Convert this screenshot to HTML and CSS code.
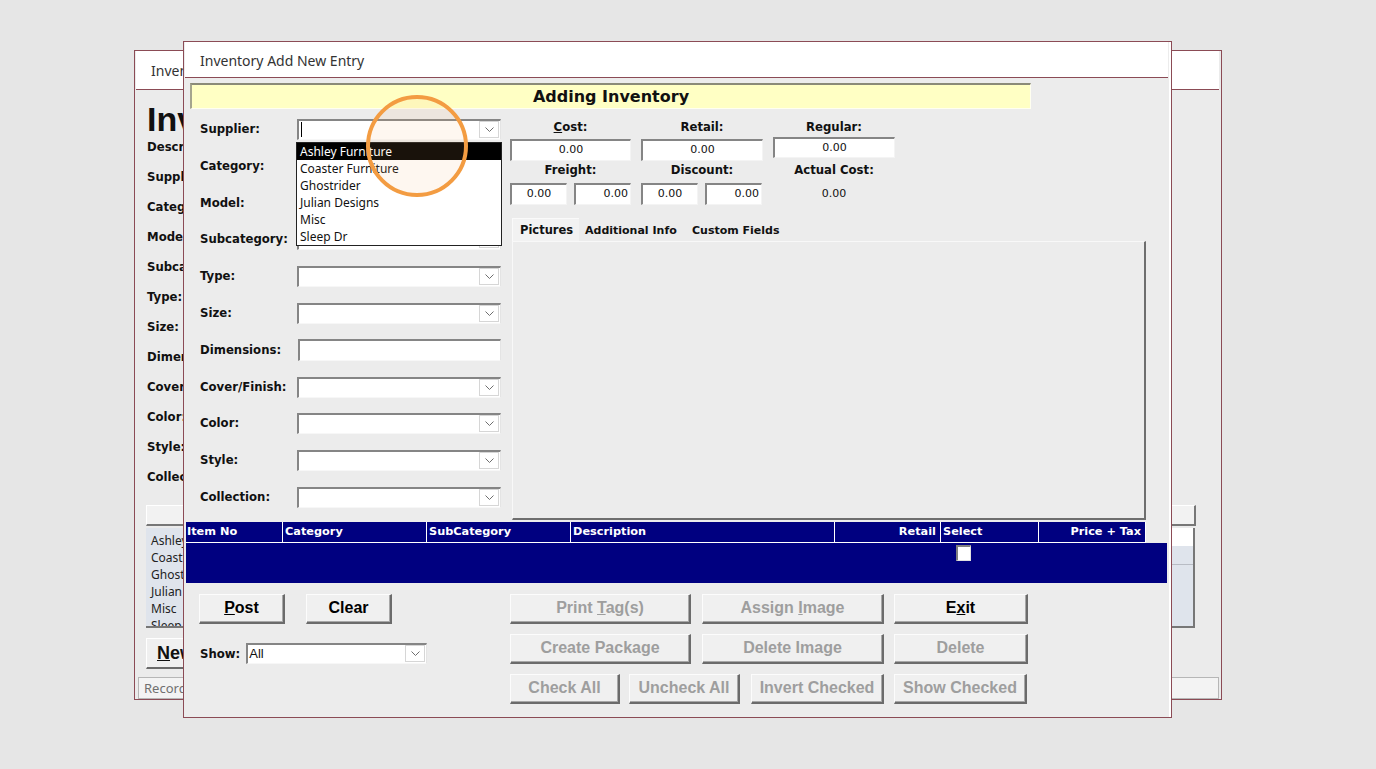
FILE: index.html
```html
<!DOCTYPE html>
<html>
<head>
<meta charset="utf-8">
<title>Inventory Add New Entry</title>
<link rel="stylesheet" href="styles.css">
</head>
<body>
<div class="win-back">
  <div class="wb-title">Inventory</div>
  <div class="wb-body">
    <div class="wb-heading">Inventory</div>
    <div class="wb-labels">
      <div>Description:</div>
      <div>Supplier:</div>
      <div>Category:</div>
      <div>Model:</div>
      <div>Subcategory:</div>
      <div>Type:</div>
      <div>Size:</div>
      <div>Dimensions:</div>
      <div>Cover/Finish:</div>
      <div>Color:</div>
      <div>Style:</div>
      <div>Collection:</div>
    </div>
    <div class="wb-listhead"></div>
    <div class="wb-list">
      <div class="wb-items">
        <div>Ashley Furniture</div>
        <div>Coaster Furniture</div>
        <div>Ghostrider</div>
        <div>Julian Designs</div>
        <div>Misc</div>
        <div>Sleep Dr</div>
      </div>
      <div class="wb-side"><div class="wb-side-top"></div><div class="wb-side-rest"></div></div>
    </div>
    <div class="wb-btn"><u>N</u>ew</div>
    <div class="wb-status">Record: 1 of 6</div>
  </div>
</div>

<div class="dialog">
  <div class="dlg-title">Inventory Add New Entry</div>
  <div class="dlg-body">
    <div class="banner">Adding Inventory</div>

    <div class="main">
      <div class="form">
        <div class="lbl">Supplier:</div>
        <div class="combo"><span class="caret"></span><span class="dd"><svg width="9" height="5" viewBox="0 0 9 5"><polyline points="0.5,0.5 4.5,4.5 8.5,0.5" fill="none" stroke="#6e6e6e" stroke-width="1"/></svg></span></div>
        <div class="lbl">Category:</div>
        <div class="combo"><span class="dd"><svg width="9" height="5" viewBox="0 0 9 5"><polyline points="0.5,0.5 4.5,4.5 8.5,0.5" fill="none" stroke="#6e6e6e" stroke-width="1"/></svg></span></div>
        <div class="lbl">Model:</div>
        <div class="combo"><span class="dd"><svg width="9" height="5" viewBox="0 0 9 5"><polyline points="0.5,0.5 4.5,4.5 8.5,0.5" fill="none" stroke="#6e6e6e" stroke-width="1"/></svg></span></div>
        <div class="lbl">Subcategory:</div>
        <div class="combo"><span class="dd"><svg width="9" height="5" viewBox="0 0 9 5"><polyline points="0.5,0.5 4.5,4.5 8.5,0.5" fill="none" stroke="#6e6e6e" stroke-width="1"/></svg></span></div>
        <div class="lbl">Type:</div>
        <div class="combo"><span class="dd"><svg width="9" height="5" viewBox="0 0 9 5"><polyline points="0.5,0.5 4.5,4.5 8.5,0.5" fill="none" stroke="#6e6e6e" stroke-width="1"/></svg></span></div>
        <div class="lbl">Size:</div>
        <div class="combo"><span class="dd"><svg width="9" height="5" viewBox="0 0 9 5"><polyline points="0.5,0.5 4.5,4.5 8.5,0.5" fill="none" stroke="#6e6e6e" stroke-width="1"/></svg></span></div>
        <div class="lbl">Dimensions:</div>
        <div class="combo text"></div>
        <div class="lbl">Cover/Finish:</div>
        <div class="combo"><span class="dd"><svg width="9" height="5" viewBox="0 0 9 5"><polyline points="0.5,0.5 4.5,4.5 8.5,0.5" fill="none" stroke="#6e6e6e" stroke-width="1"/></svg></span></div>
        <div class="lbl">Color:</div>
        <div class="combo"><span class="dd"><svg width="9" height="5" viewBox="0 0 9 5"><polyline points="0.5,0.5 4.5,4.5 8.5,0.5" fill="none" stroke="#6e6e6e" stroke-width="1"/></svg></span></div>
        <div class="lbl">Style:</div>
        <div class="combo"><span class="dd"><svg width="9" height="5" viewBox="0 0 9 5"><polyline points="0.5,0.5 4.5,4.5 8.5,0.5" fill="none" stroke="#6e6e6e" stroke-width="1"/></svg></span></div>
        <div class="lbl">Collection:</div>
        <div class="combo"><span class="dd"><svg width="9" height="5" viewBox="0 0 9 5"><polyline points="0.5,0.5 4.5,4.5 8.5,0.5" fill="none" stroke="#6e6e6e" stroke-width="1"/></svg></span></div>
      </div>

      <div class="right">
        <div class="prices">
          <div class="plabel top"><u>C</u>ost:</div>
          <div class="plabel top">Retail:</div>
          <div class="plabel top">Regular:</div>
          <div class="tbox">0.00</div>
          <div class="tbox">0.00</div>
          <div class="tbox up">0.00</div>
          <div class="plabel">Freight:</div>
          <div class="plabel">Discount:</div>
          <div class="plabel">Actual Cost:</div>
          <div class="pair"><div class="tbox">0.00</div><div class="tbox r">0.00</div></div>
          <div class="pair"><div class="tbox">0.00</div><div class="tbox r">0.00</div></div>
          <div class="pval">0.00</div>
        </div>
        <div class="tabs">
          <div class="tab active">Pictures</div>
          <div class="tab t2">Additional Info</div>
          <div class="tab t3">Custom Fields</div>
        </div>
        <div class="tabpanel"></div>
      </div>
    </div>

    <div class="grid">
      <div class="ghead">
        <div class="c1">Item No</div>
        <div class="c2">Category</div>
        <div class="c3">SubCategory</div>
        <div class="c4">Description</div>
        <div class="c5 ra">Retail</div>
        <div class="c6">Select</div>
        <div class="c7 ra">Price + Tax</div>
      </div>
      <div class="gbody">
        <div class="gsel"><span class="chk"></span></div>
      </div>
    </div>

    <div class="bottom">
      <div class="bleft">
        <div class="brow">
          <div class="btn w85"><u>P</u>ost</div>
          <div class="btn w85">Clear</div>
        </div>
        <div class="show">
          <span class="lbl">Show:</span>
          <div class="combo show-combo"><span class="val">All</span><span class="dd"><svg width="9" height="5" viewBox="0 0 9 5"><polyline points="0.5,0.5 4.5,4.5 8.5,0.5" fill="none" stroke="#6e6e6e" stroke-width="1"/></svg></span></div>
        </div>
      </div>
      <div class="bright">
        <div class="brow r1">
          <div class="btn dis w180">Print <u>T</u>ag(s)</div>
          <div class="btn dis w181">Assign <u>I</u>mage</div>
          <div class="btn w133">E<u>x</u>it</div>
        </div>
        <div class="brow r1">
          <div class="btn dis w180">Create Package</div>
          <div class="btn dis w181">Delete Image</div>
          <div class="btn dis w133">Delete</div>
        </div>
        <div class="brow r3">
          <div class="btn dis w109">Check All</div>
          <div class="btn dis w110">Uncheck All</div>
          <div class="btn dis w133">Invert Checked</div>
          <div class="btn dis w133">Show Checked</div>
        </div>
      </div>
    </div>
  </div>

  <div class="dropdown">
    <div class="opt sel">Ashley Furniture</div>
    <div class="opt">Coaster Furniture</div>
    <div class="opt">Ghostrider</div>
    <div class="opt">Julian Designs</div>
    <div class="opt">Misc</div>
    <div class="opt">Sleep Dr</div>
  </div>
  <div class="ring"></div>
</div>
</body>
</html>
```

FILE: styles.css
```css
* { box-sizing: border-box; }
html, body { margin: 0; padding: 0; }
body {
  width: 1376px;
  height: 769px;
  overflow: hidden;
  position: relative;
  background: #e6e6e6;
  font-family: "DejaVu Sans", sans-serif;
  color: #111;
}

/* ---------- background window ---------- */
.win-back {
  position: absolute;
  left: 134px;
  top: 50px;
  width: 1088px;
  height: 650px;
  border: 1px solid #8b4b55;
  background: #ebebeb;
  overflow: hidden;
}
.wb-title {
  height: 39px;
  margin: 0 2px 0 1px;
  padding-left: 15px;
  background: #fff;
  border-bottom: 1px solid #8b4b55;
  font-family: "Noto Sans", sans-serif;
  font-size: 14px;
  line-height: 40px;
  color: #333;
}
.wb-body { padding-left: 11px; }
.wb-heading {
  margin-top: 16px;
  height: 26px;
  padding-left: 1px;
  font-family: "Liberation Sans", sans-serif;
  font-weight: bold;
  font-size: 34px;
  line-height: 26px;
}
.wb-labels {
  padding-left: 1px;
  font-weight: bold;
  font-size: 11.7px;
  line-height: 30px;
}
.wb-listhead {
  margin-top: 13px;
  width: 1050px;
  height: 21px;
  background: #f2f2f2;
  border: 1px solid #fff;
  border-right: 2px solid #777;
  border-bottom: 2px solid #777;
}
.wb-list {
  margin-top: 2px;
  width: 1049px;
  height: 100px;
  display: flex;
  background: #dfe4ec;
  border-bottom: 2px solid #777;
  border-right: 2px solid #777;
}
.wb-items {
  flex: 1;
  padding: 4px 0 0 5px;
  font-family: "Noto Sans", sans-serif;
  font-size: 12px;
  line-height: 17px;
  color: #222;
  overflow: hidden;
}
.wb-side { width: 24px; display: flex; flex-direction: column; }
.wb-side-top { height: 18px; background: #fff; }
.wb-side-rest { flex: 1; border-top: 18px solid #dfe4ec; box-shadow: inset 0 1px 0 #b8bcc4; }
.wb-btn {
  margin-top: 10px;
  width: 90px;
  height: 31px;
  padding-left: 10px;
  background: #f0f0f0;
  border: 1px solid #fff;
  border-right: 2px solid #6b6b6b;
  border-bottom: 2px solid #6b6b6b;
  font-family: "Liberation Sans", sans-serif;
  font-weight: bold;
  font-size: 18px;
  line-height: 28px;
}
.wb-status {
  margin: 8px 0 0 -8px;
  width: 1081px;
  height: 22px;
  padding-left: 5px;
  background: #f3f3f3;
  border: 1px solid #b6b6b6;
  font-family: "Noto Sans", sans-serif;
  font-size: 13px;
  line-height: 20px;
  color: #707070;
}

/* ---------- dialog ---------- */
.dialog {
  position: absolute;
  left: 183px;
  top: 41px;
  width: 989px;
  height: 677px;
  border: 1px solid #8b4b55;
  background: #ececec;
  box-shadow: inset -2px 0 0 #fff;
}
.dlg-title {
  height: 36px;
  margin: 0 3px 0 1px;
  padding-left: 15px;
  background: #fff;
  border-bottom: 1px solid #8b4b55;
  font-family: "Noto Sans", sans-serif;
  font-size: 14px;
  line-height: 37px;
  color: #333;
}
.dlg-body { padding: 5px 0 0 6px; }
.banner {
  width: 841px;
  height: 26px;
  background: #ffffc4;
  border-top: 2px solid #8a8a78;
  border-left: 2px solid #a4a48e;
  border-right: 1px solid #fffff0;
  border-bottom: 1px solid #fffff0;
  text-align: center;
  font-weight: bold;
  font-size: 16px;
  line-height: 24px;
}
.main {
  margin-top: 10px;
  display: grid;
  grid-template-columns: 320px 636px;
}
.form {
  padding-left: 10px;
  display: grid;
  grid-template-columns: 97px 204px;
  grid-auto-rows: 21px;
  row-gap: 15.8px;
  align-items: center;
}
.form .lbl { margin-top: -1px; }
.lbl {
  font-weight: bold;
  font-size: 11.7px;
  color: #111;
}
.combo {
  position: relative;
  height: 21px;
  background: #fff;
  border-style: solid;
  border-width: 2px 1px 1px 2px;
  border-color: #858585 #e4e4e4 #f7f7f7 #858585;
}
.combo.text { margin-left: 1px; height: 22px; }
.caret {
  position: absolute;
  left: 2px;
  top: 1px;
  width: 1px;
  height: 15px;
  background: #000;
}
.dd {
  position: absolute;
  right: 1px;
  top: 0;
  width: 20px;
  height: 17px;
  border: 1px solid #d6d6d6;
  background: #fff;
  display: flex;
  align-items: center;
  justify-content: center;
}

.prices {
  display: grid;
  grid-template-columns: 121px 122px 122px;
  grid-template-rows: 20px 22px 22px 22px;
  column-gap: 10px;
}
.plabel {
  text-align: center;
  font-weight: bold;
  font-size: 11.7px;
  line-height: 19px;
}
.plabel.top { line-height: 17px; }
.tbox {
  height: 22px;
  background: #fff;
  border-style: solid;
  border-width: 2px 1px 1px 2px;
  border-color: #858585 #f4f4f4 #f4f4f4 #858585;
  font-size: 11px;
  line-height: 18px;
  text-align: center;
  color: #111;
}
.tbox.up { margin-top: -2px; height: 21px; }
.tbox.r { text-align: right; padding-right: 2px; }
.pair { display: flex; gap: 7px; }
.pair .tbox { width: 57px; }
.pval {
  text-align: center;
  font-size: 11px;
  line-height: 22px;
}

.tabs {
  margin: 13px 0 0 2px;
  height: 23px;
  display: flex;
  align-items: flex-end;
  gap: 2px;
}
.tab {
  height: 20px;
  padding: 0 4px;
  font-weight: bold;
  font-size: 11px;
  line-height: 20px;
  white-space: nowrap;
  background: #ececec;
}
.tab.t2 { width: 103px; }
.tab.t3 { width: 95px; padding-left: 6px; }
.tab.active {
  width: 67px;
  height: 23px;
  line-height: 22px;
  padding: 0 7px;
  font-size: 11.5px;
  background: #f2f2f2;
  border-top: 1px solid #fafafa;
  border-left: 1px solid #fafafa;
}
.tabpanel {
  margin-left: 2px;
  width: 634px;
  height: 279px;
  background: #ececec;
  border-top: 1px solid #f8f8f8;
  border-left: 1px solid #f8f8f8;
  border-right: 2px solid #6e6e6e;
  border-bottom: 2px solid #6e6e6e;
}

.grid { margin: 2px 0 0 -4px; }
.ghead {
  display: flex;
  width: 960px;
  height: 21px;
  background: #000080;
  color: #fff;
  font-weight: bold;
  font-size: 11.3px;
}
.ghead > div {
  height: 21px;
  padding: 0 2px;
  line-height: 19px;
  border-right: 1px solid #fff;
  border-bottom: 1px solid #fff;
  white-space: nowrap;
}
.ghead .ra { text-align: right; padding-right: 4px; }
.c1 { width: 97px; padding-left: 1px !important; }
.c2 { width: 144px; }
.c3 { width: 144px; }
.c4 { width: 264px; }
.c5 { width: 106px; }
.c6 { width: 98px; }
.c7 { width: 107px; }
.gbody {
  width: 981px;
  height: 40px;
  background: #000080;
  display: flex;
}
.gsel { margin-left: 770px; padding-top: 2px; }
.chk {
  display: block;
  width: 15px;
  height: 16px;
  background: #fff;
  border-style: solid;
  border-width: 2px 1px 1px 2px;
  border-color: #808080 #e0e0e0 #e0e0e0 #808080;
}

.bottom {
  margin-top: 11px;
  display: grid;
  grid-template-columns: 320px 520px;
}
.brow { display: flex; }
.bleft .brow { padding-left: 9px; gap: 21px; }
.bright { display: flex; flex-direction: column; gap: 10px; }
.r1 { gap: 11px; }
.r1 .btn:nth-child(3) { margin-left: -1px; }
.r3 { gap: 10px; }
.r3 .btn:nth-child(2) { margin-left: -1px; }
.r3 .btn:nth-child(3) { margin-left: 1px; }
.btn {
  height: 30px;
  background: #f0f0f0;
  border-style: solid;
  border-width: 1px 2px 2px 1px;
  border-color: #fcfcfc #6b6b6b #6b6b6b #fcfcfc;
  box-shadow: inset -1px -1px 0 #a8a8a8;
  text-align: center;
  font-family: "Liberation Sans", sans-serif;
  font-weight: bold;
  font-size: 16px;
  line-height: 26px;
  color: #000;
  white-space: nowrap;
}
.btn.dis { color: #9e9e9e; }
.w85 { width: 86px; }
.w109 { width: 110px; }
.w110 { width: 111px; }
.w133 { width: 134px; }
.r3 .w133 { width: 133px; }
.w180 { width: 181px; }
.w181 { width: 182px; }
.show {
  margin-top: 19px;
  padding-left: 10px;
  display: flex;
  align-items: center;
  gap: 6px;
}
.show-combo { width: 181px; }
.show-combo .val {
  position: absolute;
  left: 1px;
  top: 0;
  font-family: "Liberation Sans", sans-serif;
  font-size: 13px;
  line-height: 18px;
}

/* ---------- open supplier list + annotation ---------- */
.dropdown {
  position: absolute;
  left: 112px;
  top: 100px;
  width: 206px;
  height: 104px;
  background: #fff;
  border: 1px solid #222;
  font-family: "Noto Sans", sans-serif;
  font-size: 12px;
  line-height: 17px;
  color: #111;
}
.opt { height: 17px; padding-left: 3px; white-space: nowrap; }
.opt.sel { background: #000; color: #fff; }
.ring {
  position: absolute;
  left: 182px;
  top: 53px;
  width: 102px;
  height: 102px;
  border-radius: 50%;
  border: 4px solid #f39c42;
  background: rgba(250, 175, 110, 0.10);
}
```
